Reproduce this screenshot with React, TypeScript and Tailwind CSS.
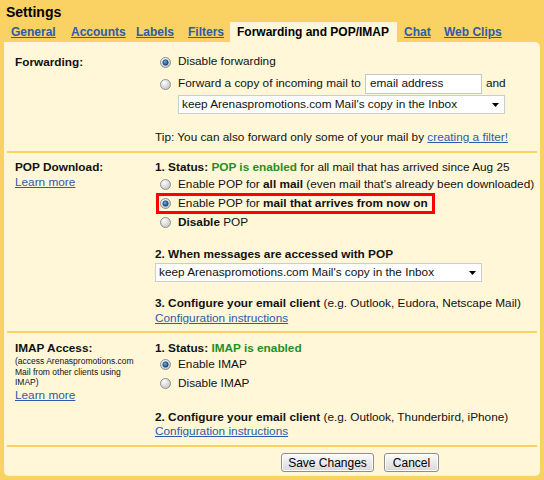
import React from "react";

const LINK = "text-[#2f5aa8] underline";

function Radio({ checked }: { checked?: boolean }) {
  return (
    <svg width="11" height="11" viewBox="0 0 11 11" className="shrink-0">
      <defs>
        <radialGradient id="radioBg" cx="35%" cy="30%" r="75%">
          <stop offset="0" stopColor="#ffffff" />
          <stop offset="1" stopColor="#c4c4c4" />
        </radialGradient>
        <radialGradient id="radioDot" cx="40%" cy="35%" r="70%">
          <stop offset="0" stopColor="#5aaee8" />
          <stop offset="1" stopColor="#0d4d8c" />
        </radialGradient>
      </defs>
      <circle cx="5.5" cy="5.5" r="5" fill="url(#radioBg)" stroke="#8f9294" strokeWidth="1" />
      {checked && <circle cx="5.5" cy="5.5" r="2.7" fill="url(#radioDot)" stroke="#16395f" strokeWidth="0.7" />}
    </svg>
  );
}

function RadioRow({ checked, children, height = "h-[19px]" }: { checked?: boolean; children: React.ReactNode; height?: string }) {
  return (
    <div className={`flex items-center gap-[7px] pl-[5px] ${height}`}>
      <Radio checked={checked} />
      <span className="whitespace-nowrap">{children}</span>
    </div>
  );
}

function SelectBox({ width, className = "" }: { width: string; className?: string }) {
  return (
    <div className={`flex h-[19px] items-center justify-between border border-[#c9ccd1] bg-white pl-[3px] pr-[5px] ${width} ${className}`}>
      <span className="whitespace-nowrap">keep Arenaspromotions.com Mail's copy in the Inbox</span>
      <svg width="7" height="4" viewBox="0 0 7 4">
        <path d="M0 0h7L3.5 4z" fill="#000" />
      </svg>
    </div>
  );
}

function Divider() {
  return <div className="mx-[3px] h-[2px] bg-[#fad163]" />;
}

function Button({ children, width }: { children: React.ReactNode; width: string }) {
  return (
    <button
      type="button"
      className={`h-[19px] rounded-[3px] border border-[#8e8e8e] bg-gradient-to-b from-[#fdfdfd] to-[#d8d8d8] text-[12px] leading-none text-black shadow-[inset_0_0_0_1px_#ffffff] ${width}`}
    >
      {children}
    </button>
  );
}

const tabs = [
  { label: "General", width: "w-[60px]" },
  { label: "Accounts", width: "w-[65px]" },
  { label: "Labels", width: "w-[52px]" },
  { label: "Filters", width: "w-[49px]" }
];

export default function App() {
  return (
    <div
      className="h-[480px] w-[544px] overflow-hidden bg-[#fad163] text-[11.8px] text-[#111]"
      style={{ fontFamily: '"Liberation Sans", Arial, sans-serif' }}
    >
      <div className="h-[22px] pl-[6px] pt-[4px] text-[14px] font-bold leading-[17px] text-black">Settings</div>

      <div className="flex h-[20px] items-center pl-[4px] text-[12px] font-bold">
        {tabs.map((t) => (
          <div key={t.label} className={`pl-[7px] ${t.width}`}>
            <span className={LINK}>{t.label}</span>
          </div>
        ))}
        <div className="flex h-[20px] w-[167px] items-center bg-[#fff7d7] pl-[7px] text-black">
          Forwarding and POP/IMAP
        </div>
        <div className="w-[40px] pl-[7px]">
          <span className={LINK}>Chat</span>
        </div>
        <div className="pl-[7px]">
          <span className={LINK}>Web Clips</span>
        </div>
      </div>

      <div className="ml-[4px] h-[434px] w-[536px] rounded-tr-[5px] rounded-b-[5px] bg-[#fff7d7]">
        {/* Forwarding */}
        <div className="flex h-[109px]">
          <div className="w-[151px] pl-[11px] pt-[12px] font-bold leading-[16px]">Forwarding:</div>
          <div className="pt-[12px]">
            <RadioRow checked height="h-[16px]">Disable forwarding</RadioRow>
            <div className="mt-[4px] flex h-[20px] items-center gap-[7px] pl-[5px]">
              <Radio />
              <span className="whitespace-nowrap">Forward a copy of incoming mail to</span>
              <div className="ml-[-3px] flex h-[20px] w-[117px] items-center border border-[#c4c7cc] bg-white pl-[4px]">
                email address
              </div>
              <span className="ml-[-3px]">and</span>
            </div>
            <SelectBox width="w-[327px]" className="ml-[23px] mt-[1px]" />
            <div className="mt-[15px] h-[16px] whitespace-nowrap leading-[16px]">
              Tip: You can also forward only some of your mail by <span className={LINK}>creating a filter!</span>
            </div>
          </div>
        </div>
        <Divider />

        {/* POP */}
        <div className="flex h-[178px]">
          <div className="w-[151px] pl-[11px] pt-[7px] leading-[15px]">
            <div className="font-bold">POP Download:</div>
            <div className={LINK}>Learn more</div>
          </div>
          <div className="pt-[7px]">
            <div className="h-[15px] whitespace-nowrap leading-[15px]">
              <b>1. Status: </b>
              <b className="text-[#1f8f25]">POP is enabled</b> for all mail that has arrived since Aug 25
            </div>
            <RadioRow>
              Enable POP for <b>all mail</b> (even mail that's already been downloaded)
            </RadioRow>
            <div className="relative">
              <RadioRow checked>
                Enable POP for <b>mail that arrives from now on</b>
              </RadioRow>
              <div className="absolute -bottom-px -top-px left-px w-[279px] border-[3px] border-[#f00]" />
            </div>
            <RadioRow>
              <b>Disable</b> POP
            </RadioRow>
            <div className="mt-[15px] h-[15px] whitespace-nowrap font-bold leading-[15px]">
              2. When messages are accessed with POP
            </div>
            <SelectBox width="w-[327px]" className="mt-[1px]" />
            <div className="mt-[14px] h-[15px] whitespace-nowrap leading-[15px]">
              <b>3. Configure your email client</b> (e.g. Outlook, Eudora, Netscape Mail)
            </div>
            <div className={`leading-[15px] ${LINK}`}>Configuration instructions</div>
          </div>
        </div>
        <Divider />

        {/* IMAP */}
        <div className="flex h-[112px]">
          <div className="w-[151px] pl-[11px] pt-[8px] leading-[15px]">
            <div className="font-bold">IMAP Access:</div>
            <div className="text-[8.5px] leading-[10.5px]">
              (access Arenaspromotions.com
              <br />
              Mail from other clients using
              <br />
              IMAP)
            </div>
            <div className={LINK}>Learn more</div>
          </div>
          <div className="pt-[8px]">
            <div className="h-[14px] whitespace-nowrap leading-[14px]">
              <b>1. Status: </b>
              <b className="text-[#1f8f25]">IMAP is enabled</b>
            </div>
            <RadioRow checked>Enable IMAP</RadioRow>
            <RadioRow>Disable IMAP</RadioRow>
            <div className="mt-[17px] h-[14px] whitespace-nowrap leading-[14px]">
              <b>2. Configure your email client</b> (e.g. Outlook, Thunderbird, iPhone)
            </div>
            <div className={`leading-[14px] ${LINK}`}>Configuration instructions</div>
          </div>
        </div>
        <Divider />

        <div className="flex gap-[10px] pl-[277px] pt-[6px]">
          <Button width="w-[93px]">Save Changes</Button>
          <Button width="w-[55px]">Cancel</Button>
        </div>
      </div>
    </div>
  );
}
